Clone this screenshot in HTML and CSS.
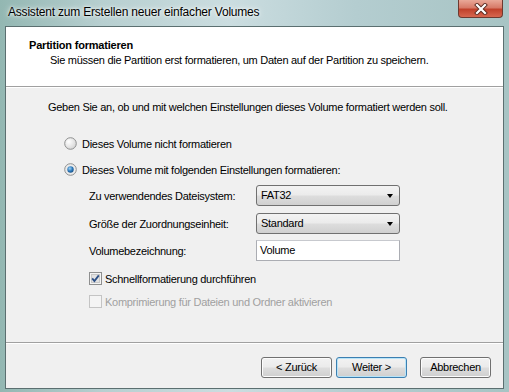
FILE: index.html
```html
<!DOCTYPE HTML>
<html>
<head>
<meta charset="utf-8">
<title>Assistent zum Erstellen neuer einfacher Volumes</title>
<link rel="stylesheet" href="styles.css">
</head>
<body>
<div class="window">
  <div class="titlebar">
    <span class="title">Assistent zum Erstellen neuer einfacher Volumes</span>
    <span class="close">
      <svg width="14" height="12" viewBox="0 0 14 12"><path d="M3 2 L11 10 M11 2 L3 10" stroke="#5a2a20" stroke-width="4" stroke-linecap="square"/><path d="M3 2 L11 10 M11 2 L3 10" stroke="#fff" stroke-width="2.2" stroke-linecap="square"/></svg>
    </span>
  </div>
  <div class="client">
    <div class="header">
      <div class="headTitle">Partition formatieren</div>
      <div class="headSub">Sie müssen die Partition erst formatieren, um Daten auf der Partition zu speichern.</div>
    </div>
    <div class="main">
      <div class="intro">Geben Sie an, ob und mit welchen Einstellungen dieses Volume formatiert werden soll.</div>
      <div class="radio first">
        <svg width="13" height="13" viewBox="0 0 13 13"><defs><radialGradient id="rg" cx="0.35" cy="0.35" r="0.8"><stop offset="0" stop-color="#fff"/><stop offset="1" stop-color="#cfcfcf"/></radialGradient></defs><circle cx="6.5" cy="6.5" r="5.8" fill="url(#rg)" stroke="#8e8f8f"/></svg>
        <span>Dieses Volume nicht formatieren</span>
      </div>
      <div class="radio">
        <svg width="13" height="13" viewBox="0 0 13 13"><defs><radialGradient id="rb" cx="0.4" cy="0.35" r="0.7"><stop offset="0" stop-color="#9fd3f5"/><stop offset="0.6" stop-color="#2a76b8"/><stop offset="1" stop-color="#1b4f82"/></radialGradient></defs><circle cx="6.5" cy="6.5" r="5.8" fill="#ececec" stroke="#8e8f8f"/><circle cx="6.5" cy="6.5" r="3.2" fill="url(#rb)"/></svg>
        <span>Dieses Volume mit folgenden Einstellungen formatieren:</span>
      </div>
      <div class="form">
        <div class="row">
          <span class="lbl">Zu verwendendes Dateisystem:</span>
          <span class="combo">FAT32<i class="arrow"></i></span>
        </div>
        <div class="row">
          <span class="lbl">Größe der Zuordnungseinheit:</span>
          <span class="combo">Standard<i class="arrow"></i></span>
        </div>
        <div class="row">
          <span class="lbl">Volumebezeichnung:</span>
          <span class="field">Volume</span>
        </div>
        <div class="check on">
          <svg width="13" height="13" viewBox="0 0 13 13"><rect x="0.5" y="0.5" width="12" height="12" fill="#f4f4f4" stroke="#8e8f8f"/><rect x="2.5" y="2.5" width="8" height="8" fill="#e2e2e2" stroke="#c8c8c8"/><path d="M3.2 6.4 L5.4 9 L9.8 3.4" fill="none" stroke="#2c4f86" stroke-width="1.8"/></svg>
          <span>Schnellformatierung durchführen</span>
        </div>
        <div class="check off">
          <svg width="13" height="13" viewBox="0 0 13 13"><rect x="0.5" y="0.5" width="12" height="12" fill="#f4f4f4" stroke="#c4c4c4"/></svg>
          <span>Komprimierung für Dateien und Ordner aktivieren</span>
        </div>
      </div>
    </div>
    <div class="footer">
      <span class="btn">&lt; Zurück</span>
      <span class="btn default">Weiter &gt;</span>
      <span class="btn cancel">Abbrechen</span>
    </div>
  </div>
</div>
</body>
</html>
```
FILE: styles.css
```css
html, body { margin:0; padding:0; }
body { font-family: "Liberation Sans", Arial, sans-serif; font-size: 11px; color: #000; letter-spacing: -0.28px; }
.window { width: 509px; height: 392px; box-sizing: border-box; padding: 0 5px 3px 5px; display: flex; flex-direction: column;
  background: linear-gradient(90deg, #93b7b2 0%, #b7cfd0 20%, #cbdde0 45%, #b4cdd0 70%, #a7c4c4 100%); }
.titlebar { height: 26px; display: flex; justify-content: space-between; align-items: flex-start; }
.title { font-size: 12px; letter-spacing: -0.2px; padding: 5px 0 0 3px; color: #000; text-shadow: 0 0 6px #fff, 0 0 3px #fff; }
.close { width: 45px; height: 18px; box-sizing: border-box; margin-right: 1px; border: 1px solid #6d3a30; border-top: none; border-radius: 0 0 4px 4px;
  background: linear-gradient(#e9a898 0%, #d77a68 45%, #c0412b 55%, #d7674f 100%); display: flex; align-items: center; justify-content: center; }
.client { flex: 1; border: 1px solid #5b6f70; background: #f0f0f0; display: flex; flex-direction: column; }
.header { height: 59px; flex: none; background: #fff; border-bottom: 1px solid #a0a0a0; box-shadow: 0 1px 0 #fff; }
.headTitle { font-weight: bold; letter-spacing: -0.2px; padding: 12px 0 0 23px; line-height: 13px; }
.headSub { padding: 2px 0 0 44px; line-height: 13px; }
.main { flex: 1; padding: 14px 0 0 42px; }
.intro { line-height: 13px; }
.radio { display: flex; align-items: center; gap: 5px; height: 13px; margin: 13px 0 0 16px; }
.radio.first { margin-top: 23px; }
.form { padding-left: 41px; padding-top: 2px; }
.row { display: flex; align-items: center; height: 21px; margin-top: 7px; }
.row:nth-child(3) { margin-top: 6px; }
.lbl { width: 167px; }
.combo { position: relative; width: 144px; height: 21px; box-sizing: border-box; border: 1px solid #707070; border-radius: 3px; padding: 3px 0 0 4px;
  background: linear-gradient(#f3f3f3 0%, #ebebeb 48%, #dddddd 52%, #d0d0d0 100%); }
.arrow { position: absolute; right: 6px; top: 8px; border-left: 3.5px solid transparent; border-right: 3.5px solid transparent; border-top: 4px solid #000; }
.field { width: 144px; height: 21px; box-sizing: border-box; border: 1px solid #abadb3; border-top-color: #c7c9ce; background: #fff; padding: 3px 0 0 3px; }
.check { display: flex; align-items: center; gap: 3px; height: 13px; margin-top: 11px; }
.check + .check { margin-top: 10px; }
.check.off { color: #a0a0a0; }
.footer { height: 46px; flex: none; border-top: 1px solid #a0a0a0; box-shadow: inset 0 1px 0 #fff; display: flex; justify-content: flex-end; align-items: flex-start; padding: 14px 12px 0 0; box-sizing: border-box; }
.btn { width: 71px; height: 21px; box-sizing: border-box; border: 1px solid #707070; border-radius: 3px; text-align: center; line-height: 19px;
  background: linear-gradient(#f2f2f2 0%, #ebebeb 48%, #dddddd 52%, #cfcfcf 100%); box-shadow: inset 0 0 0 1px #fcfcfc; margin-left: 4px; }
.btn.default { border-color: #3c7fb1; box-shadow: inset 0 0 0 1px #b8e4f8; }
.btn.cancel { margin-left: 13px; }
```
